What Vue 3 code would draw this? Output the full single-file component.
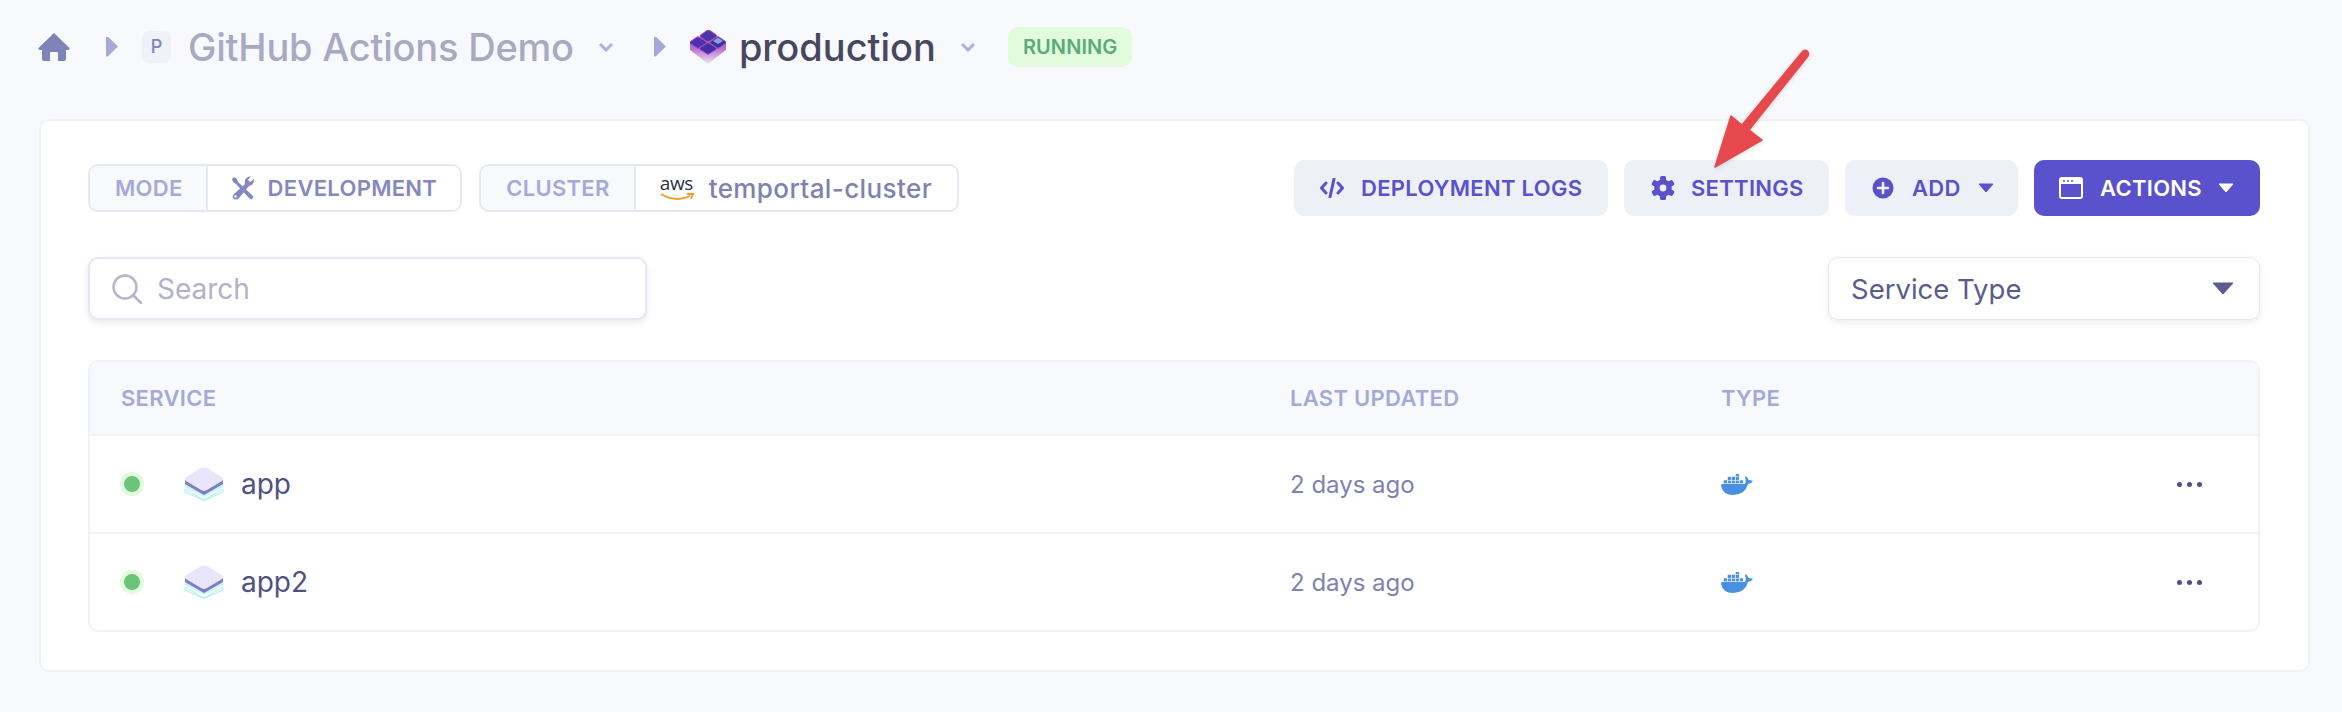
<template>
  <main class="page">
    <header class="crumbs">
      <svg class="home" viewBox="0 0 32 28"><path d="M16 0 L31.5 15 Q32 17 30 17 L28 17 L28 26 Q28 28 26 28 L20 28 L20 20 Q20 19 19 19 L13 19 Q12 19 12 20 L12 28 L6 28 Q4 28 4 26 L4 17 L2 17 Q0 17 .5 15 Z" fill="#7e83b8"/></svg>
      <span class="sep"></span>
      <span class="project-badge">P</span>
      <span class="project-name">GitHub Actions Demo</span>
      <svg class="chev" viewBox="0 0 16 10"><path d="M2 2 L8 8 L14 2" fill="none" stroke="#aeb0e0" stroke-width="3"/></svg>
      <span class="sep sep-two"></span>
      <svg class="cube" viewBox="0 0 36 34">
        <defs>
          <linearGradient id="cubeFade" x1="0" y1="0" x2="0" y2="1">
            <stop offset="0" stop-color="#9a45b8"/>
            <stop offset="0.5" stop-color="#b873cf"/>
            <stop offset="1" stop-color="#f3e6f8"/>
          </linearGradient>
        </defs>
        <path d="M0 12 L18 4 L36 12 V20 L18 34 L0 20 Z" fill="url(#cubeFade)"/>
        <g stroke="#a652c0" stroke-width="1">
          <path d="M17 .5 Q18.500 0 20 .5 L26.500 5 Q27.500 6 26.500 7 L19 11.500 Q18 12 17 11.500 L10.500 7 Q9.500 6 10.500 5 Z" fill="#4c36a8"/>
          <path d="M7 7 Q8 6.500 9 7 L16 11.500 Q17 12.500 16 13.500 L9 18 Q8 18.500 7 18 L.5 13.500 Q-.5 12.500 .5 11.500 Z" fill="#4e2fb0"/>
          <path d="M27 7 Q28 6.500 29 7 L35.500 11.500 Q36.500 12.500 35.500 13.500 L29 18 Q28 18.500 27 18 L20.500 13.500 Q19.500 12.500 20.500 11.500 Z" fill="#3f2e9f"/>
          <path d="M17 13 Q18 12.500 19 13 L26 17.500 Q27 18.500 26 19.500 L19 24 Q18 24.500 17 24 L10 19.500 Q9 18.500 10 17.500 Z" fill="#472cab"/>
        </g>
        <path d="M28 7.500 L33 11 L28 14 L23 11 Z" fill="#7fa3e0"/>
      </svg>
      <span class="env-name">production</span>
      <svg class="chev chev-two" viewBox="0 0 16 10"><path d="M2 2 L8 8 L14 2" fill="none" stroke="#aeb0e0" stroke-width="3"/></svg>
      <span class="status">RUNNING</span>
    </header>

    <section class="card">
      <div class="toolbar">
        <div class="pills">
          <div class="pill">
            <span class="pill-label mode-label">MODE</span>
            <span class="pill-value mode-value">
              <svg class="tools" viewBox="0 0 22 24">
                <path d="M2 1 L5 3 L6 6 L21 20 Q22 22 20 23 Q19 24 17 22 L4 8 L1 6 L0 3 Z" fill="#8488c2"/>
                <path d="M13 8 Q12 3 16 1 L19 0 L16 4 L18 6 L22 3 Q22 9 17 10 L7 22 Q4 25 1 22 Q0 20 2 18 Z" fill="#8488c2"/>
                <circle cx="3.500" cy="20.500" r="1.200" fill="#fff"/>
              </svg>
              DEVELOPMENT
            </span>
          </div>
          <div class="pill">
            <span class="pill-label cluster-label">CLUSTER</span>
            <span class="pill-value cluster-value">
              <span class="aws">
                <span class="aws-text">aws</span>
                <svg class="aws-smile" viewBox="0 0 34 8"><path d="M1 1 Q16 10 30 3 M27 1 L33 1 L31 6" fill="none" stroke="#f59a23" stroke-width="1.800"/></svg>
              </span>
              <span class="cluster-name">temportal-cluster</span>
            </span>
          </div>
        </div>
        <div class="buttons">
          <button class="btn logs">
            <svg class="ico-code" viewBox="0 0 24 20"><path d="M6 5 L1.500 10 L6 15 M18 5 L22.500 10 L18 15 M14 1 L10 19" fill="none" stroke="currentColor" stroke-width="3" stroke-linecap="round" stroke-linejoin="round"/></svg>
            DEPLOYMENT LOGS
          </button>
          <button class="btn settings">
            <svg class="ico-gear" viewBox="0 0 24 24">
              <rect v-for="a in gearTeeth" :key="a" x="9" y="0" width="6" height="24" rx="1.500" fill="currentColor" :transform="`rotate(${a} 12 12)`"/>
              <circle cx="12" cy="12" r="6.500" fill="none" stroke="currentColor" stroke-width="4.500"/>
              <circle cx="12" cy="12" r="3.400" fill="#edf0f6"/>
            </svg>
            SETTINGS
          </button>
          <button class="btn add">
            <svg class="ico-plus" viewBox="0 0 22 22"><circle cx="11" cy="11" r="10.500" fill="currentColor"/><path d="M11 6 V16 M6 11 H16" stroke="#edf0f6" stroke-width="2.600" stroke-linecap="round"/></svg>
            ADD
            <svg class="tri" viewBox="0 0 16 10"><path d="M1 1 H15 L8 9 Z" fill="currentColor" stroke="currentColor" stroke-linejoin="round"/></svg>
          </button>
          <button class="btn actions">
            <svg class="ico-window" viewBox="0 0 24 22">
              <rect x="1" y="1" width="22" height="20" rx="2" fill="none" stroke="#fff" stroke-width="2"/>
              <rect x="1" y="1" width="22" height="6" fill="#fff"/>
              <circle cx="5" cy="4" r="1" fill="#5a51cc"/><circle cx="9" cy="4" r="1" fill="#5a51cc"/><circle cx="13" cy="4" r="1" fill="#5a51cc"/>
            </svg>
            ACTIONS
            <svg class="tri" viewBox="0 0 16 10"><path d="M1 1 H15 L8 9 Z" fill="#fff" stroke="#fff" stroke-linejoin="round"/></svg>
          </button>
        </div>
      </div>

      <div class="filters">
        <div class="search">
          <svg class="ico-search" viewBox="0 0 30 30"><circle cx="13" cy="13" r="11.500" fill="none" stroke="#b5b5d0" stroke-width="2.500"/><path d="M21 21 L29 29" stroke="#b5b5d0" stroke-width="2.500" stroke-linecap="round"/></svg>
          <span>Search</span>
        </div>
        <div class="select">
          <span>Service Type</span>
          <svg class="select-tri" viewBox="0 0 22 13"><path d="M1 1 H21 L11 12 Z" fill="#5a5b8f" stroke="#5a5b8f" stroke-linejoin="round"/></svg>
        </div>
      </div>

      <div class="table">
        <div class="row head">
          <span>SERVICE</span>
          <span>LAST UPDATED</span>
          <span>TYPE</span>
          <span></span>
        </div>
        <div class="row body" v-for="s in services" :key="s.name">
          <div class="svc">
            <span class="dot"></span>
            <svg class="layers" viewBox="0 0 40 34">
              <path d="M1 22 L20 33 L39 22 M1 22 V25 L20 33.500 L39 25 V22" fill="#fff" stroke="#a8eef0" stroke-width="1"/>
              <path d="M1 15 L20 27 L39 15 V20 L20 30 L1 20 Z" fill="#c8f6f6"/>
              <path d="M1 13 L20 24 L39 13 V17 L20 28 L1 17 Z" fill="#7f7cc4"/>
              <path d="M17 1 Q20 -.5 23 1 L38 10 Q40 12 38 14 L23 23 Q20 24.500 17 23 L2 14 Q0 12 2 10 Z" fill="#e8e6fa"/>
            </svg>
            <span class="svc-name">{{ s.name }}</span>
          </div>
          <span class="updated">{{ s.updated }}</span>
          <svg class="docker" viewBox="0 0 32 21">
            <path d="M1 10 H24 Q25 8 24.500 5 Q24 3 24 2 Q27 3 27.500 6 Q30 6 32 7 Q30 10 27 10 Q24 21 12 21 Q2 21 0 12 Q0 10 1 10 Z" fill="#4a90e2"/>
            <g fill="#4a90e2" stroke="#fff" stroke-width=".5">
              <rect x="2.500" y="6" width="3.700" height="3.700"/><rect x="6.500" y="6" width="3.700" height="3.700"/><rect x="10.500" y="6" width="3.700" height="3.700"/><rect x="14.500" y="6" width="3.700" height="3.700"/><rect x="18.500" y="6" width="3.700" height="3.700"/>
              <rect x="6.500" y="2.500" width="3.700" height="3.700"/><rect x="10.500" y="2.500" width="3.700" height="3.700"/><rect x="14.500" y="2.500" width="3.700" height="3.700"/>
              <rect x="14.500" y="-.5" width="3.700" height="3.200"/>
            </g>
          </svg>
          <span class="more"><i></i><i></i><i></i></span>
        </div>
      </div>
    </section>

    <svg class="arrow" viewBox="0 0 2342 712">
      <path d="M1803 51 Q1806 49 1808 52 Q1809 54 1808 56 L1749 130 L1762 140 L1715 167 L1731 116 L1742 125 Z" fill="#e5494b" stroke="#e5494b" stroke-width="1.500" stroke-linejoin="round"/>
    </svg>
  </main>
</template>

<script setup>
const gearTeeth = [0, 60, 120]

const services = [
  { name: 'app', updated: '2 days ago' },
  { name: 'app2', updated: '2 days ago' },
]
</script>

<style>
html,
body {
  margin: 0;
  background: #f8f9fd;
}
</style>

<style scoped>
* {
  box-sizing: border-box;
}
.page {
  position: relative;
  width: 2342px;
  height: 712px;
  background: #f8f9fd;
  font-family: Inter, "Noto Sans", sans-serif;
  overflow: hidden;
}
.crumbs {
  display: flex;
  align-items: center;
  height: 93px;
  padding-left: 38px;
}
.home {
  width: 32px;
  height: 28px;
  margin-right: 36px;
}
.sep {
  width: 12px;
  height: 20px;
  background: #a5a9d6;
  clip-path: polygon(0 0, 15% 0, 100% 50%, 15% 100%, 0 100%);
  margin-right: 24px;
}
.sep-two {
  margin-left: 40px;
}
.project-badge {
  width: 29px;
  height: 32px;
  border-radius: 7px;
  background: #eff2f7;
  color: #7e83c4;
  font-size: 18px;
  font-weight: 500;
  text-align: center;
  line-height: 32px;
  margin-right: 17px;
}
.project-name {
  font-size: 38px;
  font-weight: 500;
  color: #a9a9c4;
  letter-spacing: -0.2px;
}
.chev {
  width: 16px;
  height: 10px;
  margin-left: 24px;
}
.chev-two {
  margin-left: 24px;
}
.cube {
  width: 36px;
  height: 34px;
  margin-right: 13px;
}
.env-name {
  font-size: 38px;
  font-weight: 500;
  color: #474760;
}
.status {
  margin-left: 32px;
  height: 40px;
  padding: 0 15px;
  line-height: 40px;
  border-radius: 10px;
  background: #e1fbdc;
  color: #59ab7a;
  font-size: 20px;
  font-weight: 600;
  letter-spacing: 0.1px;
}
.card {
  margin: 26px 32px 0 39px;
  height: 553px;
  background: #fff;
  border: 2px solid #f0f2f7;
  border-radius: 10px;
  padding: 39px 48px 0 47px;
}
.toolbar {
  display: flex;
  justify-content: space-between;
  align-items: center;
  height: 56px;
}
.pills {
  display: flex;
  gap: 17px;
}
.pill {
  display: flex;
  height: 48px;
  border: 2px solid #e5e8f4;
  border-radius: 10px;
  overflow: hidden;
  font-size: 22px;
  font-weight: 600;
  letter-spacing: 0.3px;
}
.pill-label {
  display: flex;
  align-items: center;
  background: #f8f9fd;
  color: #a5a9d9;
  border-right: 2px solid #e5e8f4;
}
.mode-label {
  padding: 0 23px 0 25px;
}
.cluster-label {
  padding: 0 24px 0 25px;
}
.pill-value {
  display: flex;
  align-items: center;
  background: #fff;
  color: #8488c2;
}
.mode-value {
  padding: 0 23px 0 24px;
  gap: 14px;
}
.tools {
  width: 22px;
  height: 24px;
}
.cluster-value {
  padding: 0 25px 0 24px;
  gap: 15px;
}
.aws {
  position: relative;
  display: block;
  width: 34px;
  height: 30px;
}
.aws-text {
  display: block;
  font-family: "Open Sans", sans-serif;
  font-size: 19px;
  font-weight: 500;
  line-height: 20px;
  color: #2d3340;
  letter-spacing: -0.3px;
}
.aws-smile {
  display: block;
  width: 34px;
  height: 8px;
}
.cluster-name {
  font-size: 26px;
  font-weight: 500;
  color: #8081b3;
  letter-spacing: 0.4px;
}
.buttons {
  display: flex;
  gap: 16px;
}
.btn {
  display: flex;
  align-items: center;
  height: 56px;
  border: none;
  border-radius: 10px;
  background: #edf0f6;
  color: #5a51cc;
  font-family: inherit;
  font-size: 22px;
  font-weight: 600;
  letter-spacing: 0.3px;
  white-space: nowrap;
}
.logs {
  width: 314px;
  padding-left: 26px;
  gap: 17px;
}
.ico-code {
  width: 24px;
  height: 20px;
}
.settings {
  width: 205px;
  padding-left: 27px;
  gap: 16px;
}
.ico-gear {
  width: 24px;
  height: 24px;
}
.add {
  width: 173px;
  padding-left: 27px;
  gap: 18px;
}
.ico-plus {
  width: 22px;
  height: 22px;
}
.tri {
  width: 16px;
  height: 10px;
  margin-left: -1px;
}
.actions {
  width: 226px;
  padding-left: 25px;
  gap: 17px;
  background: #5a51cc;
  color: #fff;
}
.ico-window {
  width: 24px;
  height: 22px;
}
.filters {
  display: flex;
  justify-content: space-between;
  align-items: center;
  margin-top: 41px;
  height: 63px;
}
.search {
  display: flex;
  align-items: center;
  gap: 15px;
  width: 559px;
  height: 63px;
  padding-left: 22px;
  background: #fff;
  border: 2px solid #e5e8f4;
  border-radius: 10px;
  box-shadow: 0 3px 6px rgba(80, 90, 150, 0.12);
  font-size: 28px;
  color: #b1b1cc;
}
.ico-search {
  width: 30px;
  height: 30px;
}
.select {
  display: flex;
  justify-content: space-between;
  align-items: center;
  width: 432px;
  height: 63px;
  padding: 0 24px 0 22px;
  background: #fff;
  border: 1px solid #e5e8f4;
  border-radius: 10px;
  box-shadow: 0 3px 6px rgba(80, 90, 150, 0.1);
  font-size: 27.5px;
  color: #5a5b8f;
}
.select-tri {
  width: 22px;
  height: 13px;
  margin-right: 1px;
}
.table {
  margin-top: 40px;
  width: 2172px;
  border: 2px solid #f0f2f7;
  border-radius: 10px;
  overflow: hidden;
}
.row {
  display: grid;
  grid-template-columns: 1169px 431px 1fr 81px;
  align-items: center;
  padding-left: 31px;
}
.head {
  height: 74px;
  background: #f8f9fd;
  border-bottom: 2px solid #f0f2f7;
  font-size: 22px;
  font-weight: 600;
  color: #a5a9d9;
  letter-spacing: 0.3px;
}
.body {
  height: 96px;
}
.body + .body {
  height: 98px;
  border-top: 2px solid #f0f2f7;
}
.svc {
  display: flex;
  align-items: center;
}
.dot {
  width: 24px;
  height: 24px;
  border-radius: 50%;
  background: #6ac47a;
  border: 4px solid #e1fbdc;
  margin-left: -1px;
  margin-right: 40px;
}
.layers {
  width: 40px;
  height: 34px;
  margin-right: 17px;
}
.svc-name {
  font-size: 28px;
  color: #505082;
}
.updated {
  font-size: 24px;
  color: #8081b3;
}
.docker {
  width: 32px;
  height: 21px;
}
.more {
  display: flex;
  gap: 5px;
}
.more i {
  width: 5px;
  height: 5px;
  border-radius: 50%;
  background: #505082;
}
.arrow {
  position: absolute;
  inset: 0;
  width: 2342px;
  height: 712px;
  pointer-events: none;
  filter: drop-shadow(0 1px 2px rgba(0, 0, 0, 0.15));
}
</style>
